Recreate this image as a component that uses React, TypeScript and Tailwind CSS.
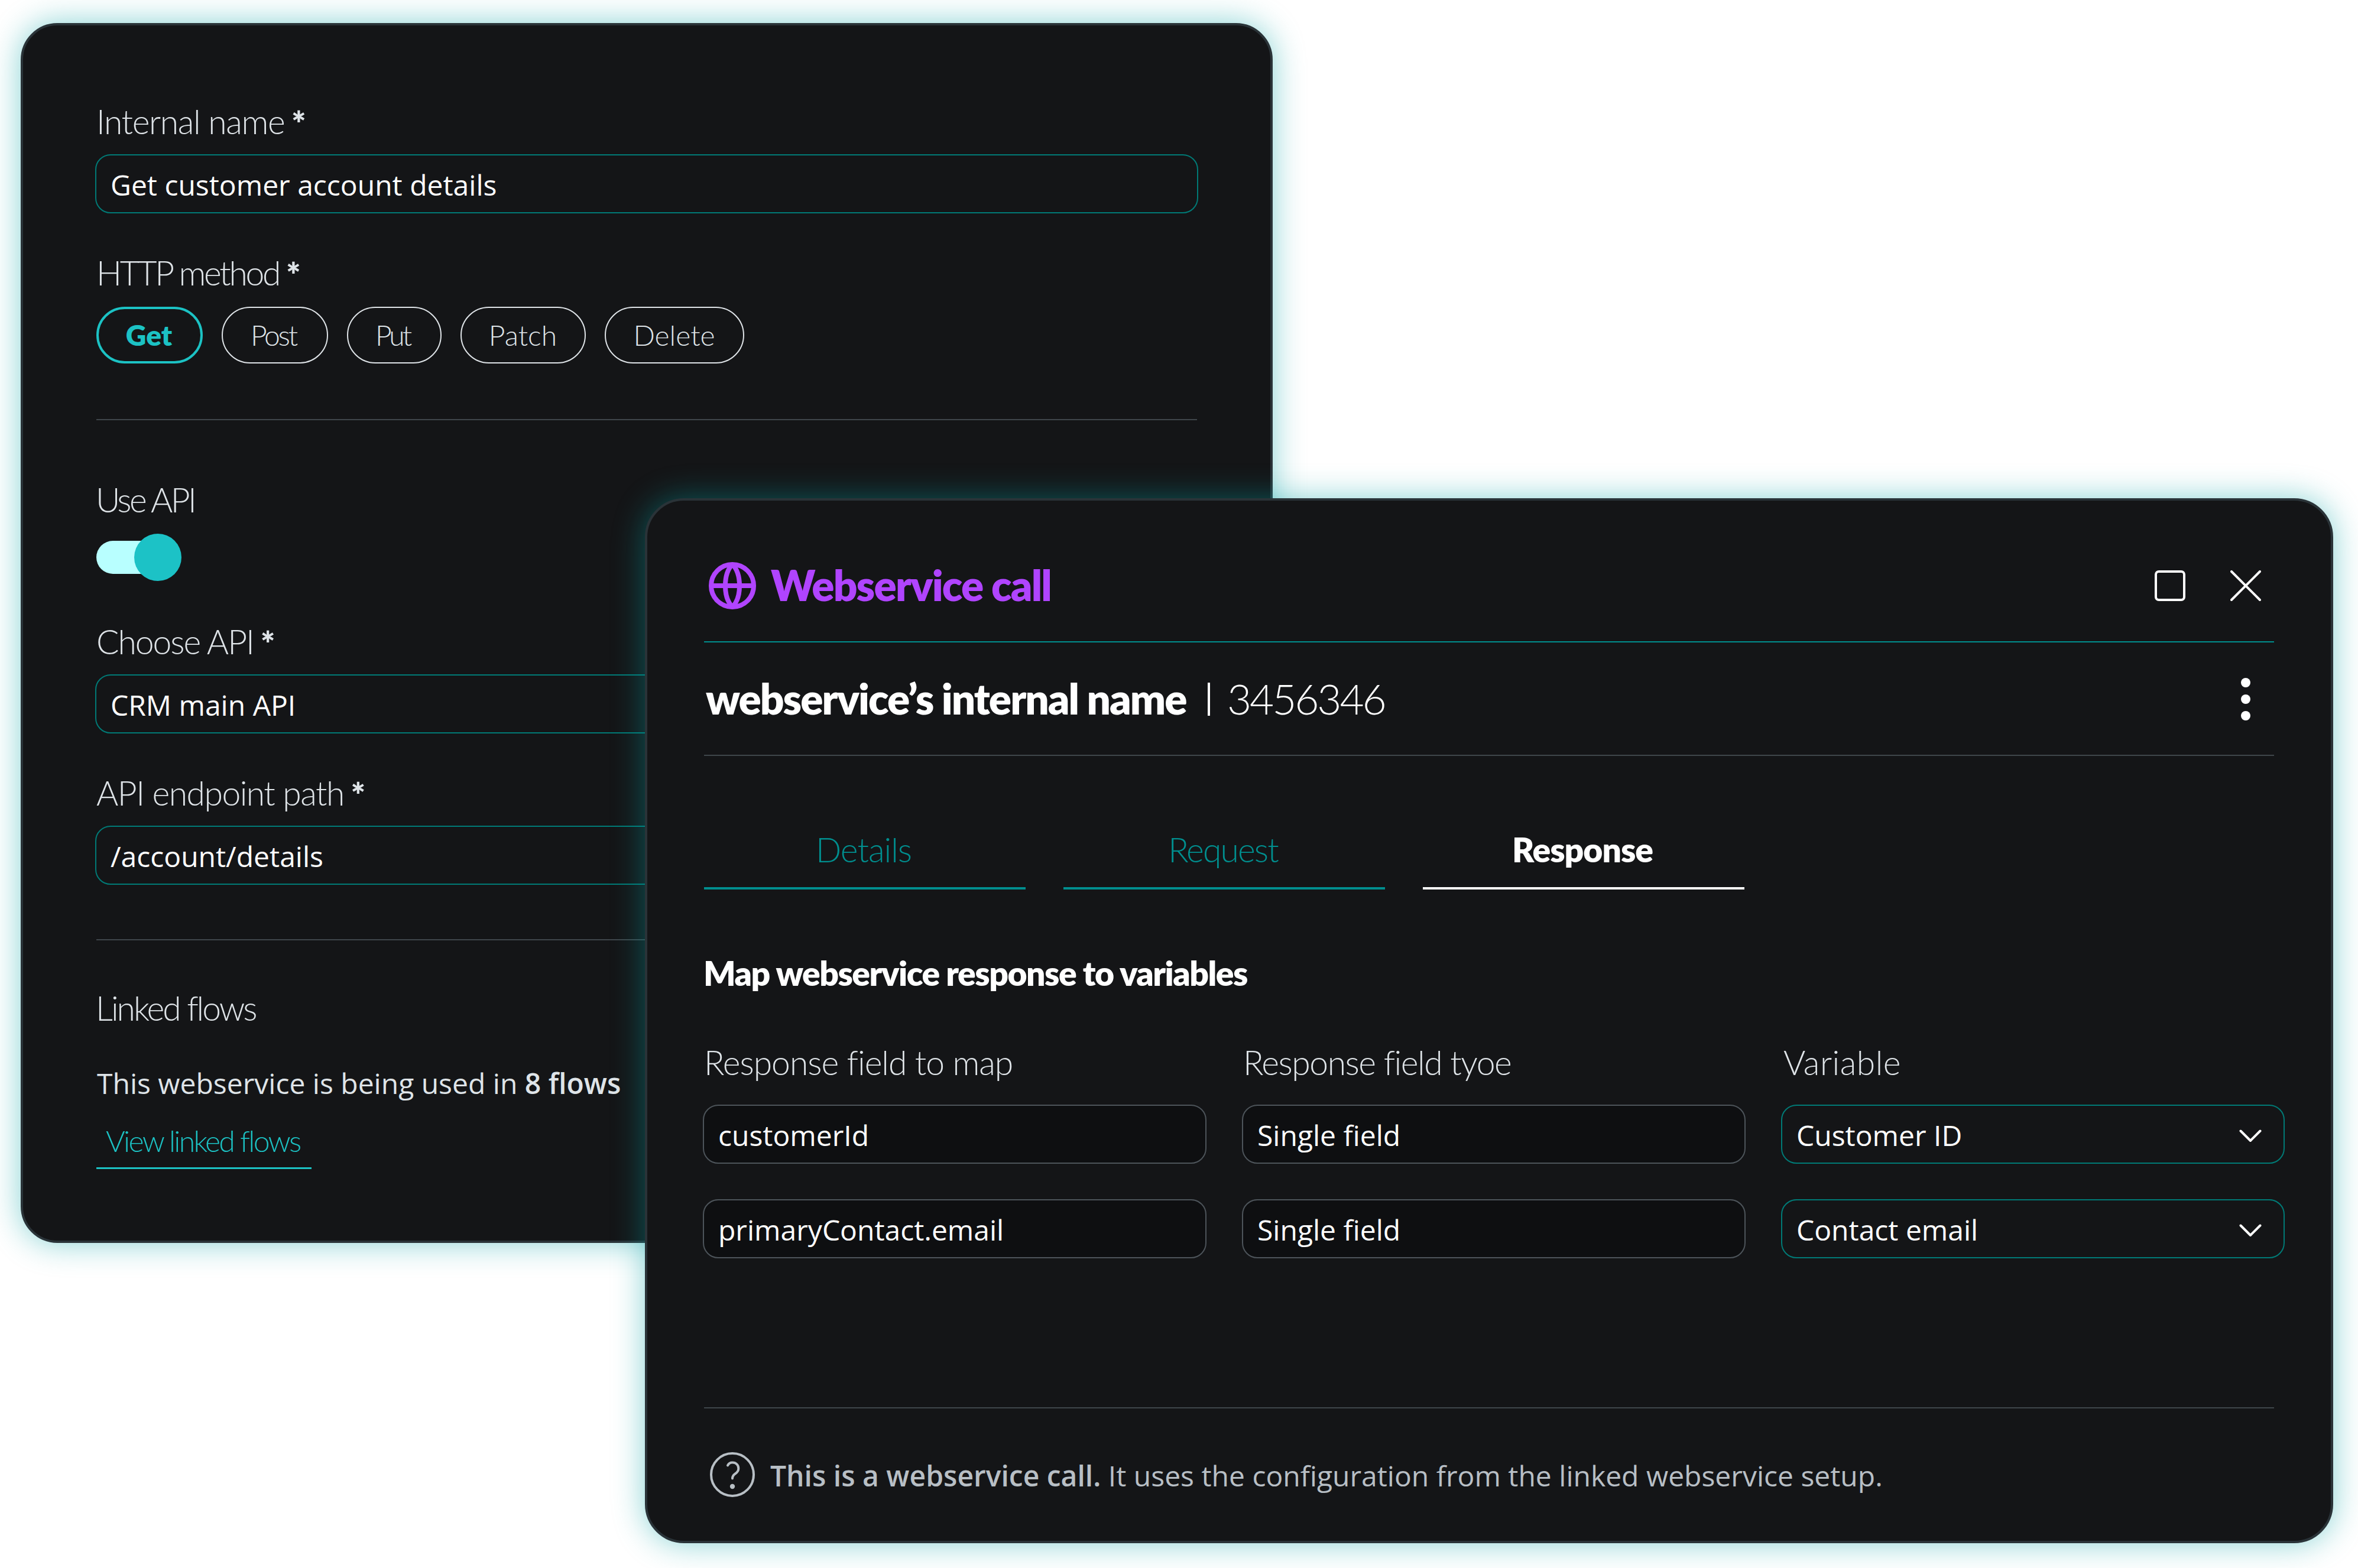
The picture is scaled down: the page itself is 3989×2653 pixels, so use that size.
import React from "react";

const panel =
  "absolute border-4 border-[#2a3338] bg-[#141517] shadow-[0_0_54px_rgba(0,160,163,0.48)]";

const lightLabel = "font-[Lato] font-light text-[57px] leading-[68px] whitespace-nowrap";
const body = "font-['Open_Sans'] text-[48px] leading-[66px] whitespace-nowrap";

function Label({
  children,
  tracking,
  required = false,
}: {
  children: React.ReactNode;
  tracking: string;
  required?: boolean;
}) {
  return (
    <div className={`flex h-[68px] pl-[2px] text-[#dfe4e8] ${lightLabel}`}>
      <span className={tracking}>{children}</span>
      {required && <span className="ml-[12px] mt-[3px] font-extrabold">*</span>}
    </div>
  );
}

function Field({
  children,
  variant = "teal",
  chevron = false,
}: {
  children: React.ReactNode;
  variant?: "teal" | "gray";
  chevron?: boolean;
}) {
  const look = variant === "teal" ? "border-[#007a76]" : "border-[#4d545a] bg-[#0e0f11]";
  return (
    <div
      className={`flex h-[100px] items-center justify-between rounded-[26px] border-2 pl-[24px] pr-[37px] text-white ${look}`}
    >
      <span className={`pt-[3px] ${body}`}>{children}</span>
      {chevron && (
        <svg width="38" height="22" viewBox="0 0 38 22" fill="none" className="mt-[6px]">
          <path
            d="M2.5 2.5 19 19 35.5 2.5"
            stroke="#fff"
            strokeWidth="4"
            strokeLinecap="round"
            strokeLinejoin="round"
          />
        </svg>
      )}
    </div>
  );
}

const methods = [
  { name: "Get", box: "w-[180px] border-4 border-[#1cc2c4] text-[#1cc2c4] font-extrabold", tracking: "mr-[2px]" },
  { name: "Post", box: "w-[180px] border-2 border-[#dfe4e8] text-[#dfe4e8] font-light", tracking: "mr-[5px] tracking-[-3.2px]" },
  { name: "Put", box: "w-[160px] border-2 border-[#dfe4e8] text-[#dfe4e8] font-light", tracking: "mr-[6px] tracking-[-4px]" },
  { name: "Patch", box: "w-[212px] border-2 border-[#dfe4e8] text-[#dfe4e8] font-light", tracking: "mr-[1px]" },
  { name: "Delete", box: "w-[236px] border-2 border-[#dfe4e8] text-[#dfe4e8] font-light", tracking: "mr-[1px]" },
];

function WebserviceForm() {
  return (
    <section className={`left-[35px] top-[39px] h-[2064px] w-[2118px] rounded-[62px] px-[122px] pt-[128px] ${panel}`}>
      <div className="flex flex-col">
        <Label required tracking="tracking-[-1.38px]">Internal name</Label>
        <div className="mt-[22px]">
          <Field>Get customer account details</Field>
        </div>

        <div className="mt-[66px]">
          <Label required tracking="tracking-[-3.3px]">HTTP method</Label>
        </div>
        <div className="mt-[24px] flex gap-8 pl-[2px]">
          {methods.map((m) => (
            <div
              key={m.name}
              className={`flex h-[96px] items-center justify-center rounded-full font-[Lato] text-[48px] leading-[60px] ${m.box}`}
            >
              <span className={m.tracking}>{m.name}</span>
            </div>
          ))}
        </div>

        <div className="mx-[2px] mt-[94px] h-[2px] bg-[#3f464b]" />

        <div className="mt-[100px] -ml-[1px]">
          <Label tracking="tracking-[-3.61px]">Use API</Label>
        </div>
        <div className="mt-[24px] ml-[2px] flex h-[80px] w-[144px] items-center">
          <div className="h-[56px] w-[104px] rounded-full bg-[#b8ffff]" />
          <div className="-ml-[40px] h-[80px] w-[80px] shrink-0 rounded-full bg-[#1cc2c6]" />
        </div>

        <div className="mt-[68px]">
          <Label required tracking="tracking-[-2.03px]">Choose API</Label>
        </div>
        <div className="mt-[22px]">
          <Field>CRM main API</Field>
        </div>

        <div className="mt-[66px]">
          <Label required tracking="tracking-[-1.52px]">API endpoint path</Label>
        </div>
        <div className="mt-[22px]">
          <Field>/account/details</Field>
        </div>

        <div className="mx-[2px] mt-[92px] h-[2px] bg-[#3f464b]" />

        <div className="mt-[80px] -ml-[1px]">
          <Label tracking="tracking-[-2.95px]">Linked flows</Label>
        </div>
        <div className={`mt-[61px] pl-[3px] text-[#dfe4e8] ${body}`}>
          This webservice is being used in <span className="font-semibold">8 flows</span>
        </div>
        <div className="mt-[34px] ml-[2px] w-[364px] border-b-3 border-[#1cc2c4] pb-[15px] pl-[16px] font-[Lato] text-[50px] font-light leading-[60px] tracking-[-2.72px] whitespace-nowrap text-[#1cc2c4]">
          View linked flows
        </div>
      </div>
    </section>
  );
}

function GlobeIcon() {
  return (
    <svg width="80" height="80" viewBox="0 0 80 80" fill="none" stroke="#b044ff" strokeWidth="8">
      <circle cx="40" cy="40" r="36" />
      <path d="M4 40h72" />
      <path d="M40 4C31 13 28 26 28 40s3 27 12 36" />
      <path d="M40 4c9 9 12 22 12 36s-3 27-12 36" />
    </svg>
  );
}

function HelpIcon() {
  return (
    <svg width="76" height="76" viewBox="0 0 76 76" fill="none" className="shrink-0">
      <circle cx="38" cy="38" r="36" stroke="#b8bfc5" strokeWidth="4" />
      <path
        d="M30 22.5c1.8-3.4 4.600-4.900 8-4.900 6.200 0 10.300 4.200 10.300 9.900 0 4.200-2.300 6.900-5.500 9-3 2-4.800 3.800-4.800 8"
        stroke="#b8bfc5"
        strokeWidth="4"
        strokeLinecap="round"
      />
      <circle cx="38" cy="58" r="4.200" fill="#b8bfc5" />
    </svg>
  );
}

const tabs = [
  { name: "Details", style: "border-[#008f8f] text-[#008f8f] font-light tracking-[-0.99px] pr-[4px]" },
  { name: "Request", style: "border-[#008f8f] text-[#008f8f] font-light tracking-[-1.86px] pr-[4px]" },
  { name: "Response", style: "border-white text-white font-extrabold tracking-[-1px] pr-[4px]" },
];

const mappings = [
  ["customerId", "Single field", "Customer ID"],
  ["primaryContact.email", "Single field", "Contact email"],
];

function WebserviceDialog() {
  return (
    <section
      className={`left-[1091px] top-[843px] h-[1768px] w-[2856px] rounded-[66px] pl-[94px] pr-[78px] pt-[104px] ${panel}`}
    >
      <div className="flex flex-col">
        <header className="flex h-[80px] items-center pl-[10px] pr-[40px]">
          <GlobeIcon />
          <h1 className="-mt-[3px] ml-[25px] flex-1 font-[Lato] text-[71px] font-extrabold leading-[86px] tracking-[-1.8px] whitespace-nowrap text-[#b044ff]">
            Webservice call
          </h1>
          <svg width="52" height="52" viewBox="0 0 52 52" fill="none">
            <rect x="2" y="2" width="48" height="48" rx="5" stroke="#fff" strokeWidth="4" />
          </svg>
          <svg width="52" height="52" viewBox="0 0 52 52" fill="none" className="ml-[76px]">
            <path d="M2 2l48 48M50 2L2 50" stroke="#fff" strokeWidth="4" strokeLinecap="round" />
          </svg>
        </header>

        <div className="mt-[54px] mr-[18px] ml-[2px] h-[2px] bg-[#008f8f]" />

        <div className="mt-[48px] flex h-[96px] items-center pl-[5px] pr-[58px] font-[Lato] text-[71px] leading-[86px] text-white">
          <h2 className="w-[849px] -mt-[3px] font-extrabold tracking-[-1.95px] whitespace-nowrap">
            webservice’s internal name
          </h2>
          <div className="h-[56px] w-[4px] bg-white" />
          <span className="-mt-[3px] ml-[29px] flex-1 font-light tracking-[-3.1px]">3456346</span>
          <svg width="16" height="72" viewBox="0 0 16 72" fill="#fff">
            <circle cx="8" cy="8" r="8" />
            <circle cx="8" cy="36" r="8" />
            <circle cx="8" cy="64" r="8" />
          </svg>
        </div>

        <div className="mt-[46px] mr-[18px] ml-[2px] h-[2px] bg-[#3f464b]" />

        <nav className="mt-[124px] flex gap-16 pl-[2px]">
          {tabs.map((t) => (
            <div
              key={t.name}
              className={`w-[544px] border-b-4 pb-[30px] text-center font-[Lato] text-[57px] leading-[68px] ${t.style}`}
            >
              {t.name}
            </div>
          ))}
        </nav>

        <h3 className="mt-[107px] pl-[1px] font-[Lato] text-[57px] font-extrabold leading-[68px] tracking-[-1.5px] whitespace-nowrap text-white">
          Map webservice response to variables
        </h3>

        <div className="mt-[83px] grid grid-cols-3 gap-x-[60px]">
          <Label tracking="tracking-[-1.02px]">Response field to map</Label>
          <Label tracking="tracking-[-1.46px]">Response field tyoe</Label>
          <Label tracking="ml-[2px] tracking-[0.5px]">Variable</Label>
        </div>
        <div className="mt-[38px] grid grid-cols-3 gap-[60px]">
          {mappings.map(([source, kind, variable]) => (
            <React.Fragment key={source}>
              <Field variant="gray">{source}</Field>
              <Field variant="gray">{kind}</Field>
              <Field chevron>{variable}</Field>
            </React.Fragment>
          ))}
        </div>

        <div className="mt-[252px] mr-[18px] ml-[2px] h-[2px] bg-[#3f464b]" />

        <footer className="mt-[74px] flex h-[76px] items-center gap-[26px] pl-[12px]">
          <HelpIcon />
          <p className={`pt-[3px] text-[#b8bfc5] ${body}`}>
            <span className="font-semibold">This is a webservice call.</span> It uses the
            configuration from the linked webservice setup.
          </p>
        </footer>
      </div>
    </section>
  );
}

export default function App() {
  return (
    <main className="relative h-[2653px] w-[3989px] overflow-hidden bg-white">
      <WebserviceForm />
      <WebserviceDialog />
    </main>
  );
}
